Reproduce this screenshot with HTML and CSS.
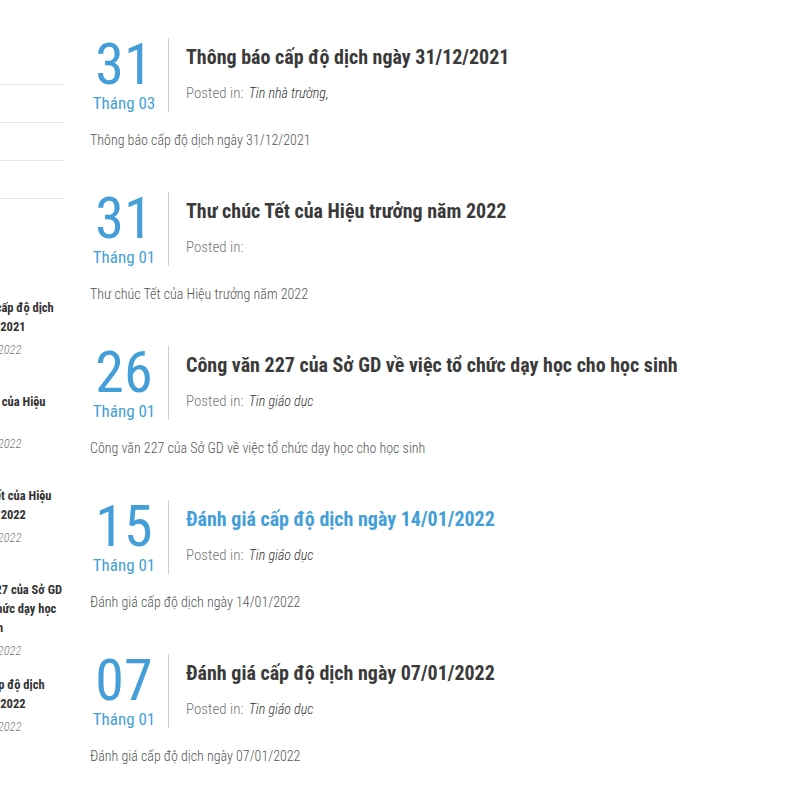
FILE: index.html
```html
<!DOCTYPE html>
<html lang="vi">
<head>
<meta charset="utf-8">
<title>Tin tức</title>
<link rel="stylesheet" href="styles.css">
</head>
<body>
<div class="page">
  <aside class="sidebar">
    <ul class="cat-list">
      <li></li>
      <li></li>
      <li></li>
      <li></li>
    </ul>
    <ul class="recent">
      <li class="recent-item">
        <a class="recent-title" href="#">Thông báo cấp độ dịch ngày 31/12/2021</a>
        <span class="recent-date">31 Tháng 3, 2022</span>
      </li>
      <li class="recent-item">
        <a class="recent-title" href="#">Thư cảm ơn của Hiệu trưởng</a>
        <span class="recent-date">31 Tháng 1, 2022</span>
      </li>
      <li class="recent-item">
        <a class="recent-title" href="#">Thư chúc Tết của Hiệu trưởng năm 2022</a>
        <span class="recent-date">31 Tháng 1, 2022</span>
      </li>
      <li class="recent-item">
        <a class="recent-title" href="#">Công văn 227 của Sở GD về việc tổ chức dạy học cho học sinh</a>
        <span class="recent-date">26 Tháng 1, 2022</span>
      </li>
      <li class="recent-item">
        <a class="recent-title" href="#">Đánh giá cấp độ dịch ngày 14/01/2022</a>
        <span class="recent-date">15 Tháng 1, 2022</span>
      </li>
    </ul>
  </aside>

  <main class="posts">
    <article class="post">
      <div class="post-head">
        <div class="post-date"><span class="day">31</span><span class="month">Tháng 03</span></div>
        <div class="post-info">
          <h2 class="post-title"><a href="#">Thông báo cấp độ dịch ngày 31/12/2021</a></h2>
          <p class="post-meta">Posted in: <a class="cat" href="#">Tin nhà trường,</a></p>
        </div>
      </div>
      <p class="excerpt">Thông báo cấp độ dịch ngày 31/12/2021</p>
    </article>

    <article class="post">
      <div class="post-head">
        <div class="post-date"><span class="day">31</span><span class="month">Tháng 01</span></div>
        <div class="post-info">
          <h2 class="post-title"><a href="#">Thư chúc Tết của Hiệu trưởng năm 2022</a></h2>
          <p class="post-meta">Posted in:</p>
        </div>
      </div>
      <p class="excerpt">Thư chúc Tết của Hiệu trưởng năm 2022</p>
    </article>

    <article class="post">
      <div class="post-head">
        <div class="post-date"><span class="day">26</span><span class="month">Tháng 01</span></div>
        <div class="post-info">
          <h2 class="post-title"><a href="#">Công văn 227 của Sở GD về việc tổ chức dạy học cho học sinh</a></h2>
          <p class="post-meta">Posted in: <a class="cat" href="#">Tin giáo dục</a></p>
        </div>
      </div>
      <p class="excerpt">Công văn 227 của Sở GD về việc tổ chức dạy học cho học sinh</p>
    </article>

    <article class="post">
      <div class="post-head">
        <div class="post-date"><span class="day">15</span><span class="month">Tháng 01</span></div>
        <div class="post-info">
          <h2 class="post-title"><a class="is-hover" href="#">Đánh giá cấp độ dịch ngày 14/01/2022</a></h2>
          <p class="post-meta">Posted in: <a class="cat" href="#">Tin giáo dục</a></p>
        </div>
      </div>
      <p class="excerpt">Đánh giá cấp độ dịch ngày 14/01/2022</p>
    </article>

    <article class="post">
      <div class="post-head">
        <div class="post-date"><span class="day">07</span><span class="month">Tháng 01</span></div>
        <div class="post-info">
          <h2 class="post-title"><a href="#">Đánh giá cấp độ dịch ngày 07/01/2022</a></h2>
          <p class="post-meta">Posted in: <a class="cat" href="#">Tin giáo dục</a></p>
        </div>
      </div>
      <p class="excerpt">Đánh giá cấp độ dịch ngày 07/01/2022</p>
    </article>
  </main>
</div>
</body>
</html>
```
FILE: styles.css
```css
* { box-sizing: border-box; }
html, body { margin: 0; padding: 0; background: #fff; }
body {
  font-family: Roboto, "Noto Sans", sans-serif;
  font-stretch: 75%;
  color: #555;
  overflow: hidden;
}
a { text-decoration: none; color: inherit; }
ul { list-style: none; margin: 0; padding: 0; }

.page {
  display: flex;
  align-items: flex-start;
}

/* ---------- sidebar (clipped at the left edge) ---------- */
.sidebar {
  flex: none;
  width: 125px;
  margin-left: -60px;
}
.cat-list {
  padding-top: 47px;
}
.cat-list li {
  height: 38px;
  border-bottom: 1px solid #e6e6e6;
}
.recent {
  margin-top: 99px;
}
.recent-item {
  min-height: 80px;
  margin-bottom: 14px;
}
.recent-title {
  display: block;
  font-weight: 700;
  font-size: 12.5px;
  line-height: 19px;
  color: #333;
}
.recent-date {
  display: block;
  margin-top: 4px;
  font-size: 12.5px;
  line-height: 20px;
  font-style: italic;
  font-weight: 300;
  color: #777;
}

/* ---------- main posts ---------- */
.posts {
  flex: 1;
  margin-left: 25px;
  padding-top: 38px;
}
.post {
  margin-bottom: 42px;
}
.post-head {
  display: flex;
}
.post-date {
  flex: none;
  width: 78px;
  height: 74px;
  padding-right: 10px;
  display: flex;
  flex-direction: column;
  align-items: center;
  color: #449fd8;
  font-weight: 400;
}
.day {
  font-size: 58px;
  line-height: 53px;
}
.month {
  font-size: 17px;
  line-height: 24px;
}
.post-info {
  border-left: 1px solid #cfcfcf;
  padding-left: 17px;
  min-height: 74px;
}
.post-title {
  margin: 4px 0 0;
  font-size: 20px;
  line-height: 30px;
  font-weight: 700;
  color: #3a3a3a;
  white-space: nowrap;
}
.post-title .is-hover { color: #449fd8; }
.post-meta {
  margin: 11px 0 0;
  font-size: 15px;
  line-height: 20px;
  font-weight: 300;
  color: #777;
}
.cat {
  font-style: italic;
  font-weight: 300;
  font-size: 14px;
  color: #333;
  margin-left: 2px;
}
.excerpt {
  margin: 18px 0 0;
  font-size: 14px;
  line-height: 20px;
  font-weight: 300;
  color: #555;
}
```
